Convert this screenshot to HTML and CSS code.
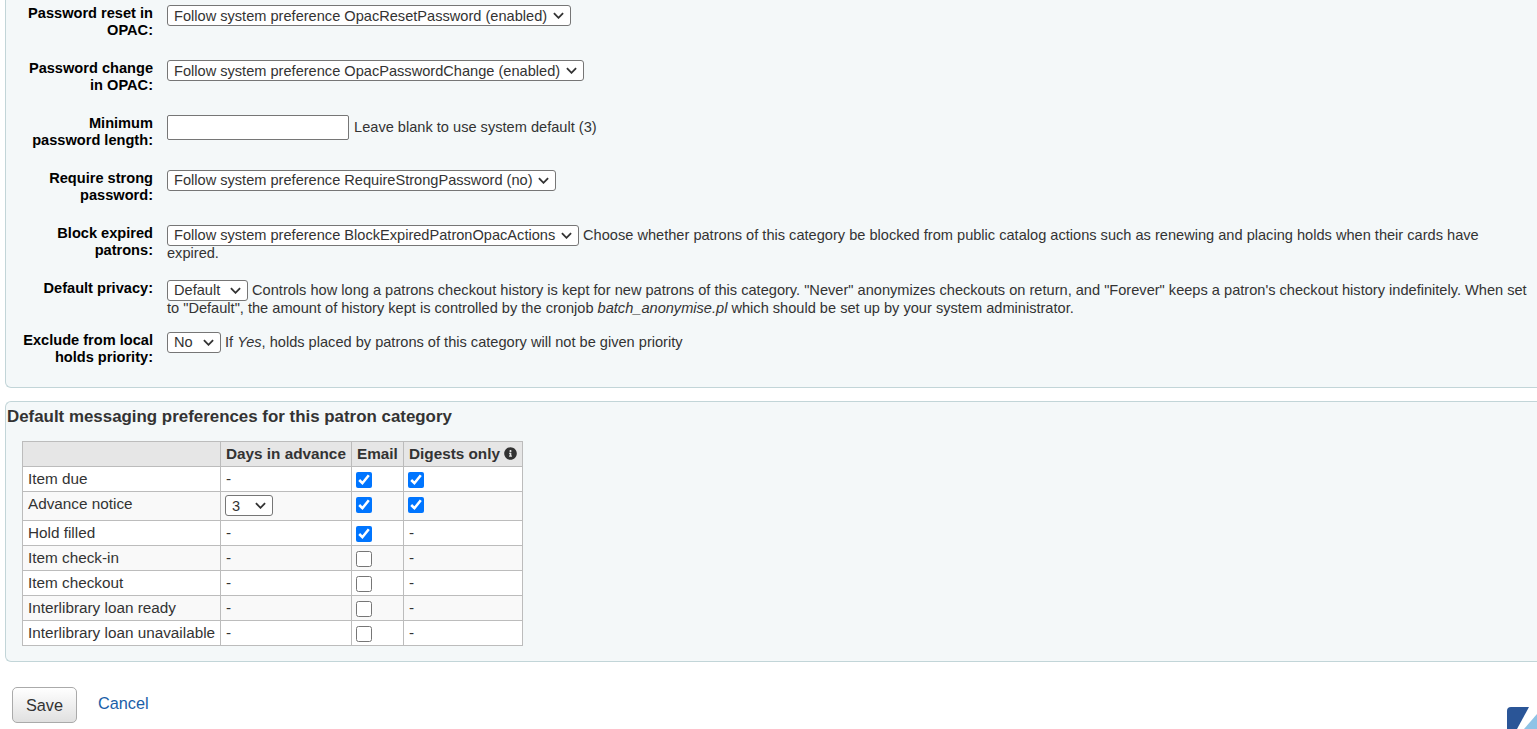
FILE: index.html
```html
<!DOCTYPE html>
<html lang="en">
<head>
    <meta charset="UTF-8">
    <title>Patron category</title>
    <link rel="stylesheet" href="styles.css">
</head>
<body>

    <!-- Category options -->
    <div class="panel panel-options">
        <div class="field">
            <label class="field-label">Password reset in OPAC:</label>
            <div class="field-value">
                <select><option>Follow system preference OpacResetPassword (enabled)</option></select>
            </div>
        </div>
        <div class="field">
            <label class="field-label">Password change in OPAC:</label>
            <div class="field-value">
                <select><option>Follow system preference OpacPasswordChange (enabled)</option></select>
            </div>
        </div>
        <div class="field">
            <label class="field-label">Minimum password length:</label>
            <div class="field-value">
                <input type="text" class="text-input"> Leave blank to use system default (3)
            </div>
        </div>
        <div class="field field-up">
            <label class="field-label">Require strong password:</label>
            <div class="field-value">
                <select><option>Follow system preference RequireStrongPassword (no)</option></select>
            </div>
        </div>
        <div class="field field-up">
            <label class="field-label">Block expired patrons:</label>
            <div class="field-value">
                <select><option>Follow system preference BlockExpiredPatronOpacActions</option></select>
                Choose whether patrons of this category be blocked from public catalog actions such as renewing and placing holds when their cards have expired.
            </div>
        </div>
        <div class="field field-up field-short">
            <label class="field-label">Default privacy:</label>
            <div class="field-value">
                <select class="select-privacy"><option>Default</option></select>
                Controls how long a patrons checkout history is kept for new patrons of this category. "Never" anonymizes checkouts on return, and "Forever" keeps a patron's checkout history indefinitely. When set to "Default", the amount of history kept is controlled by the cronjob <i>batch_anonymise.pl</i> which should be set up by your system administrator.
            </div>
        </div>
        <div class="field field-up">
            <label class="field-label">Exclude from local holds priority:</label>
            <div class="field-value">
                <select class="select-no"><option>No</option></select>
                If <i>Yes</i>, holds placed by patrons of this category will not be given priority
            </div>
        </div>
    </div>

    <!-- Messaging preferences -->
    <div class="panel panel-messaging">
        <h3 class="panel-title">Default messaging preferences for this patron category</h3>
        <table class="prefs-table">
            <thead>
                <tr>
                    <th class="col-name"></th>
                    <th class="col-days">Days in advance</th>
                    <th class="col-email">Email</th>
                    <th class="col-digest">Digests only
                        <svg class="info-icon" viewBox="0 0 512 512"><path d="M256 8C119 8 8 119 8 256s111 248 248 248 248-111 248-248S393 8 256 8zm0 110c23 0 42 19 42 42s-19 42-42 42-42-19-42-42 19-42 42-42zm56 254c0 7-5 12-12 12h-88c-7 0-12-5-12-12v-24c0-7 5-12 12-12h12v-64h-12c-7 0-12-5-12-12v-24c0-7 5-12 12-12h64c7 0 12 5 12 12v100h12c7 0 12 5 12 12v24z"/></svg>
                    </th>
                </tr>
            </thead>
            <tbody>
                <tr>
                    <td>Item due</td>
                    <td>-</td>
                    <td><input type="checkbox" checked></td>
                    <td><input type="checkbox" checked></td>
                </tr>
                <tr>
                    <td>Advance notice</td>
                    <td><select class="select-days"><option>3</option></select></td>
                    <td><input type="checkbox" checked></td>
                    <td><input type="checkbox" checked></td>
                </tr>
                <tr>
                    <td>Hold filled</td>
                    <td>-</td>
                    <td><input type="checkbox" checked></td>
                    <td>-</td>
                </tr>
                <tr>
                    <td>Item check-in</td>
                    <td>-</td>
                    <td><input type="checkbox"></td>
                    <td>-</td>
                </tr>
                <tr>
                    <td>Item checkout</td>
                    <td>-</td>
                    <td><input type="checkbox"></td>
                    <td>-</td>
                </tr>
                <tr>
                    <td>Interlibrary loan ready</td>
                    <td>-</td>
                    <td><input type="checkbox"></td>
                    <td>-</td>
                </tr>
                <tr>
                    <td>Interlibrary loan unavailable</td>
                    <td>-</td>
                    <td><input type="checkbox"></td>
                    <td>-</td>
                </tr>
            </tbody>
        </table>
    </div>

    <!-- Form actions -->
    <div class="actions">
        <button class="save-btn">Save</button>
        <a class="cancel-link" href="#">Cancel</a>
    </div>

    <svg class="corner-logo" viewBox="0 0 30 22">
        <path fill="#2a5597" d="M4 0H22L10 22H0V4a4 4 0 0 1 4-4z"/>
        <path fill="#8fc3e6" d="M17 22 30 7V22z"/>
    </svg>

</body>
</html>
```

FILE: styles.css
```css
html, body {
    height: 729px;
    overflow: hidden;
}
body {
    position: relative;
    margin: 0;
    font-family: "Liberation Sans", Arial, sans-serif;
    font-size: 14.6px;
    line-height: 18px;
    color: #333;
    background-color: white;
}
select {
    appearance: none;
    box-sizing: border-box;
    font-family: "Liberation Sans", Arial, sans-serif;
    font-size: 14.6px;
    height: 21px;
    margin: -1px 0 -2px;
    padding: 0 22px 0 6px;
    color: #333;
    vertical-align: top;
    border: 1px solid #767676;
    border-radius: 3px;
    background: white url("data:image/svg+xml,%3Csvg xmlns='http://www.w3.org/2000/svg' viewBox='0 0 12 7'%3E%3Cpath d='M1 1l5 5 5-5' fill='none' stroke='%23333' stroke-width='2'/%3E%3C/svg%3E") no-repeat right 6px center / 11px 7px;
}
.panel {
    margin-left: 5px;
    width: 1560px;
    background-color: #f4f8f9;
    border: 1px solid #c2d5d8;
    border-right: none;
    box-sizing: border-box;
}
.panel-options {
    height: 388px;
    padding-top: 5px;
    border-top: none;
    border-radius: 0 0 0 6px;
}
.panel-messaging {
    height: 261px;
    margin-top: 13px;
    border-radius: 6px 0 0 6px;
}
.field {
    display: flex;
    height: 55px;
    padding-right: 33px;
}
.field-short {
    height: 52px;
}
.field-up select {
    padding-bottom: 2px;
}
.field-label {
    flex: none;
    box-sizing: border-box;
    width: 147px;
    line-height: 17px;
    padding-left: 14px;
    font-weight: bold;
    color: #000;
    text-align: right;
}
.field-value {
    margin-left: 14px;
    padding-top: 1px;
    flex: 1;
}
.text-input {
    box-sizing: border-box;
    width: 182px;
    height: 25px;
    margin: -1px 1px 0 0;
    padding: 1px 2px;
    background-color: white;
    border: 1px solid #767676;
    border-radius: 2px;
    vertical-align: middle;
}
.panel-title {
    margin: 5px 0 14px 1px;
    font-size: 16.9px;
    line-height: 20px;
}
.prefs-table {
    margin-left: 16px;
    border-collapse: collapse;
    table-layout: fixed;
    width: 500px;
    background-color: white;
}
.prefs-table th, .prefs-table td {
    box-sizing: border-box;
    border: 1px solid #bcbcbc;
    padding: 3px 5px;
    height: 25px;
    text-align: left;
    vertical-align: top;
    font-size: 15.3px;
    white-space: nowrap;
}
.prefs-table th {
    background-color: #e6e6e6;
    font-weight: bold;
}
.prefs-table tbody tr:nth-child(even) td {
    background-color: #f9f9f9;
}
.prefs-table input[type="checkbox"] {
    display: block;
    width: 16px;
    height: 16px;
    margin: 2px 0 0 -1px;
}
.col-name { width: 198px; }
.col-days { width: 131px; }
.col-email { width: 52px; }
.col-digest { width: 119px; }
.info-icon {
    width: 13px;
    height: 13px;
    fill: #333;
    vertical-align: -1px;
}
.prefs-table .select-days {
    width: 48px;
    display: block;
    margin: 0 0 1px -1px;
}
.select-privacy { width: 81px; }
.select-no { width: 54px; }
.actions {
    display: flex;
    align-items: flex-start;
    gap: 21px;
    margin: 25px 0 0 12px;
}
.save-btn {
    box-sizing: border-box;
    width: 65px;
    height: 36px;
    padding: 0;
    font-family: "Liberation Sans", Arial, sans-serif;
    font-size: 16.3px;
    color: #333;
    background: linear-gradient(#ffffff, #e0e0e0);
    border: 1px solid #aaa;
    border-radius: 5px;
}
.cancel-link {
    margin-top: 6px;
    font-size: 16.3px;
    line-height: 20px;
    color: #1a5ea8;
    text-decoration: none;
}
.corner-logo {
    position: absolute;
    left: 1507px;
    top: 707px;
    width: 30px;
    height: 22px;
}
```
